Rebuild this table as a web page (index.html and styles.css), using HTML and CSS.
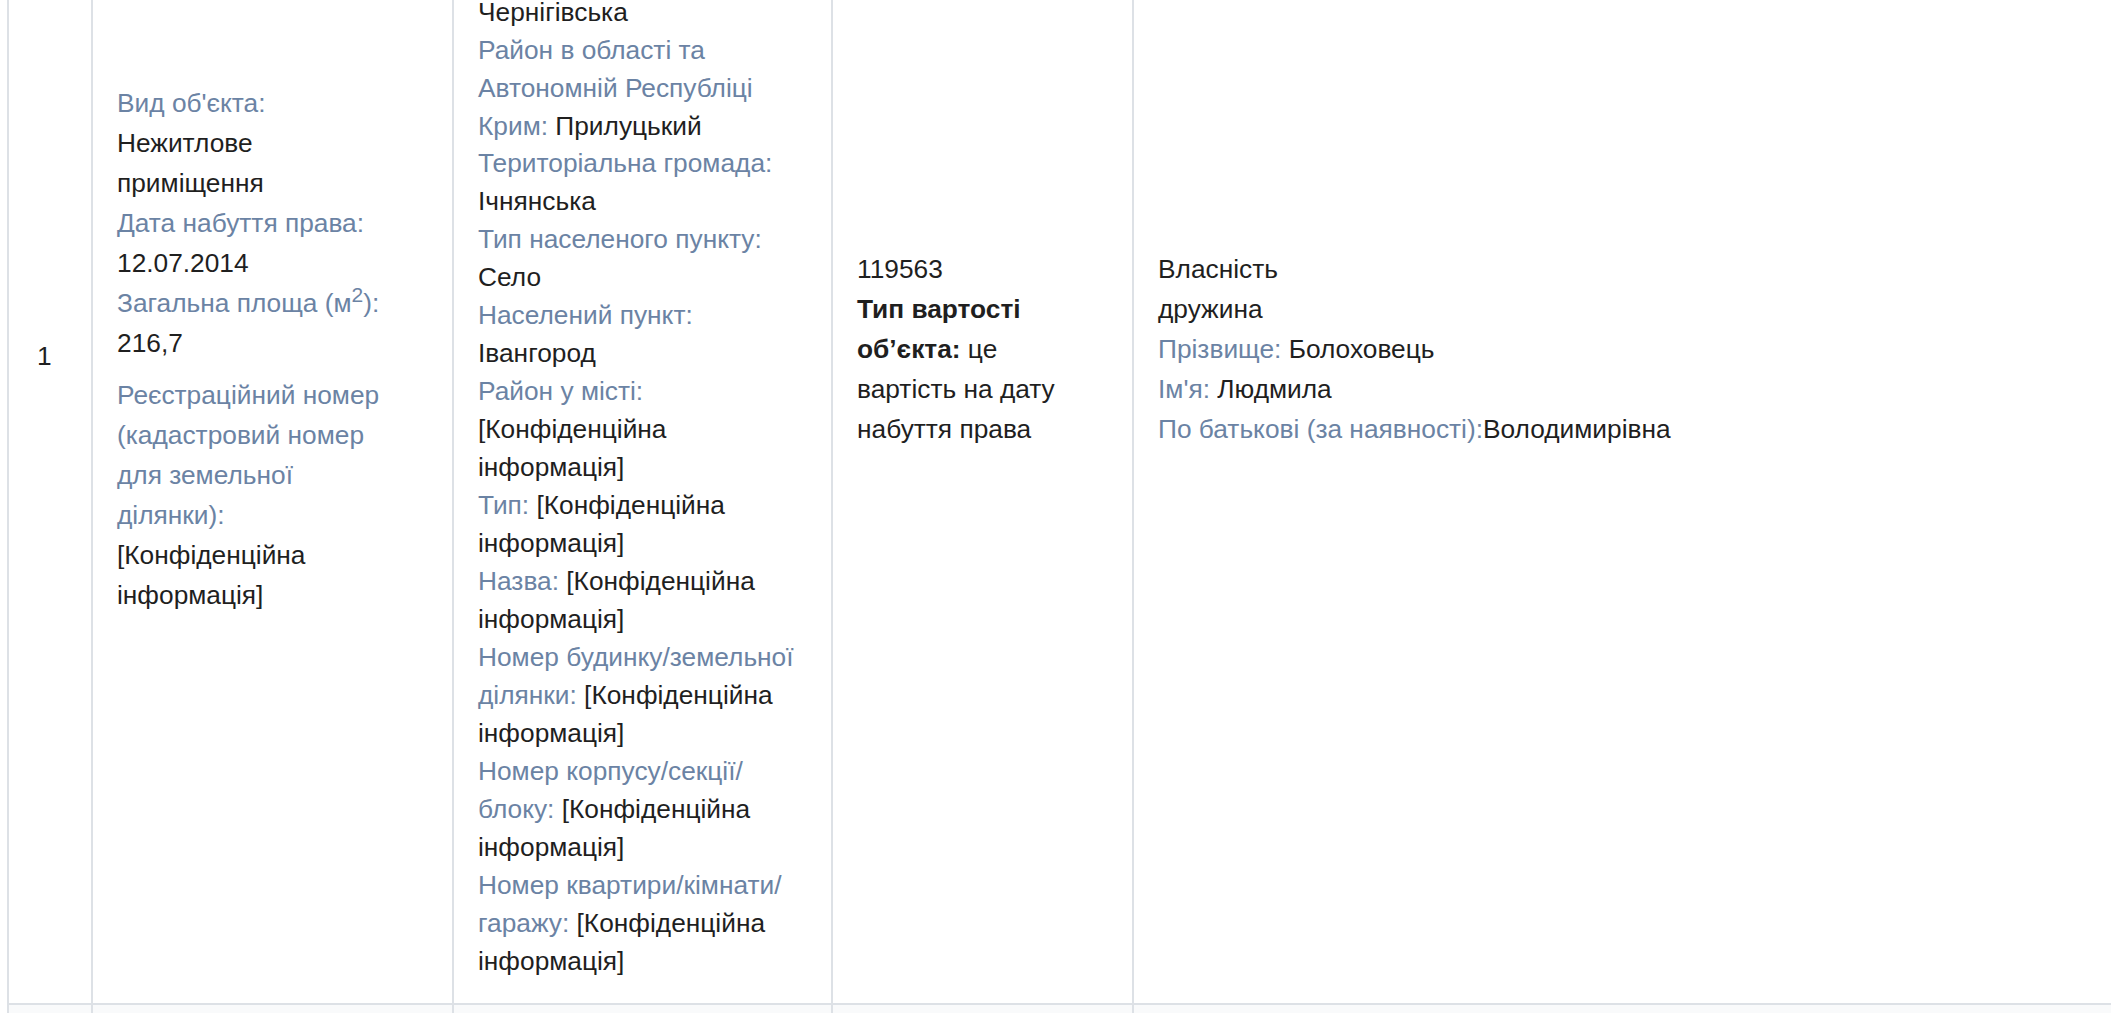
FILE: index.html
```html
<!DOCTYPE html>
<html lang="uk">
<head>
  <meta charset="UTF-8">
  <meta name="viewport" content="width=device-width, initial-scale=1.0">
  <title>Об'єкти нерухомості</title>
  <link rel="stylesheet" href="styles.css">
</head>
<body>

  <div class="declaration">
    <table class="property-table">
      <tr>
        <td class="cell cell-num">1</td>

        <!-- Об'єкт -->
        <td class="cell cell-object">
          <div class="field"><span class="label">Вид об'єкта:</span> Нежитлове приміщення</div>
          <div class="field"><span class="label">Дата набуття права:</span> 12.07.2014</div>
          <div class="field"><span class="label">Загальна площа (м<sup>2</sup>):</span> 216,7</div>
          <div class="field field-gap"><span class="label">Реєстраційний номер (кадастровий номер для земельної ділянки):</span> [Конфіденційна інформація]</div>
        </td>

        <!-- Місцезнаходження -->
        <td class="cell cell-address">
          <div class="field"><span class="label">Країна:</span> Україна</div>
          <div class="field"><span class="label">Поштовий індекс:</span> [Конфіденційна інформація]</div>
          <div class="field"><span class="label">Адреса:</span> [Конфіденційна інформація]</div>
          <div class="field"><span class="label">Область:</span></div>
          <div class="field">Чернігівська</div>
          <div class="field"><span class="label">Район в області та Автономній Республіці Крим:</span> Прилуцький</div>
          <div class="field"><span class="label">Територіальна громада:</span> Ічнянська</div>
          <div class="field"><span class="label">Тип населеного пункту:</span> Село</div>
          <div class="field"><span class="label">Населений пункт:</span> Івангород</div>
          <div class="field"><span class="label">Район у місті:</span> [Конфіденційна інформація]</div>
          <div class="field"><span class="label">Тип:</span> [Конфіденційна інформація]</div>
          <div class="field"><span class="label">Назва:</span> [Конфіденційна інформація]</div>
          <div class="field"><span class="label">Номер будинку/земельної ділянки:</span> [Конфіденційна інформація]</div>
          <div class="field"><span class="label">Номер корпусу/<wbr>секції/<wbr>блоку:</span> [Конфіденційна інформація]</div>
          <div class="field"><span class="label">Номер квартири/<wbr>кімнати/<wbr>гаражу:</span> [Конфіденційна інформація]</div>
        </td>

        <!-- Вартість -->
        <td class="cell cell-cost">
          <div class="field">119563</div>
          <div class="field"><b>Тип вартості об’єкта:</b> це вартість на дату набуття права</div>
        </td>

        <!-- Право -->
        <td class="cell cell-owner">
          <div class="field">Власність</div>
          <div class="field">дружина</div>
          <div class="field"><span class="label">Прізвище:</span> Болоховець</div>
          <div class="field"><span class="label">Ім'я:</span> Людмила</div>
          <div class="field"><span class="label">По батькові (за наявності):</span>Володимирівна</div>
        </td>
      </tr>

      <tr class="row-next">
        <td class="cell cell-num">2</td>
        <td class="cell">&nbsp;</td>
        <td class="cell">&nbsp;</td>
        <td class="cell">&nbsp;</td>
        <td class="cell">&nbsp;</td>
      </tr>
    </table>
  </div>

</body>
</html>
```

FILE: styles.css
```css
body {
  margin: 0;
  font-family: "Liberation Sans", Arial, sans-serif;
  font-size: 26.3px;
  color: #1f1f1f;
  background: #fff;
  overflow: hidden;
}
.declaration {
  padding-left: 7px;
}
.property-table {
  border-collapse: separate;
  border-spacing: 0;
  table-layout: fixed;
  width: 2200px;
  margin-top: -306px; /* сторінка прокручена до середини рядка */
}
.cell {
  box-sizing: border-box;
  border-left: 2px solid #dde1e6;
  border-bottom: 2px solid #dde1e6;
  padding: 27px 24px;
  vertical-align: middle;
  line-height: 40px;
}
.cell-num {
  width: 84px;
  padding-top: 41px;
  padding-left: 28px;
}
.cell-object {
  width: 361px;
  padding-right: 57px;
}
.cell-address {
  width: 379px;
  padding-top: 34px;
  padding-bottom: 23px;
  line-height: 37.95px;
}
.cell-cost {
  width: 301px;
  padding-right: 55px;
}
.cell-owner {
  width: 1075px;
}
.label {
  color: #6b83a4;
}
.field-gap {
  margin-top: 12px;
}
sup {
  font-size: 0.8em;
  line-height: 0;
}
.row-next .cell {
  background: #f9fafb;
}
```
